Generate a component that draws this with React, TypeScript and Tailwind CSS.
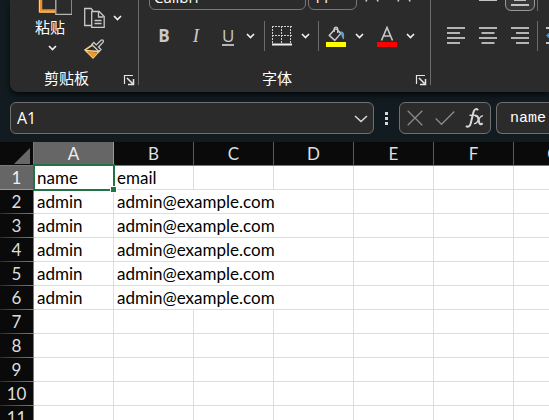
import type { ReactNode } from 'react';

const columns = ['A', 'B', 'C', 'D', 'E', 'F', 'G'];

const records = [
  { name: 'name', email: 'email' },
  { name: 'admin', email: 'admin@example.com' },
  { name: 'admin', email: 'admin@example.com' },
  { name: 'admin', email: 'admin@example.com' },
  { name: 'admin', email: 'admin@example.com' },
  { name: 'admin', email: 'admin@example.com' },
];

const rowNumbers = Array.from({ length: 11 }, (_, i) => i + 1);

function Chevron() {
  return (
    <svg width="9" height="6" viewBox="0 0 9 6" fill="none" stroke="#f2f2f2" strokeWidth="1.6" aria-hidden="true">
      <path d="M1 1l3.5 3.5L8 1" />
    </svg>
  );
}

function MenuButton({ label }: { label: string }) {
  return (
    <button type="button" aria-label={label} className="flex h-6 w-5 items-center justify-center">
      <Chevron />
    </button>
  );
}

function Launcher({ label }: { label: string }) {
  return (
    <button type="button" aria-label={label} className="mt-1 flex size-3 items-center justify-center">
      <svg width="12" height="12" viewBox="0 0 12 12" fill="none" stroke="#e6e6e6" aria-hidden="true">
        <path d="M1.5 10V1.5H10" strokeWidth="1.2" />
        <path d="M4 4l5.5 5.5M10.5 5v5.5H5" strokeWidth="1.5" />
      </svg>
    </button>
  );
}

function GroupLabel({ text, children }: { text: string; children?: ReactNode }) {
  return (
    <div className="flex h-6 items-center pr-[3px]">
      <span className="flex-1 text-center text-[15px] leading-6 whitespace-nowrap">{text}</span>
      {children}
    </div>
  );
}

function AlignIcon({ kind }: { kind: 'left' | 'center' | 'right' }) {
  const x = kind === 'left' ? 0 : kind === 'center' ? 2.5 : 5;
  return (
    <svg width="18" height="18" viewBox="0 0 18 18" fill="#b4b4b4" aria-hidden="true">
      <rect x="0" y="0" width="18" height="2" />
      <rect x={x} y="5" width="13" height="2" />
      <rect x="0" y="10" width="18" height="2" />
      <rect x={x} y="15" width="13" height="2" />
    </svg>
  );
}

function FontSizeIcon() {
  return (
    <svg width="14" height="18" viewBox="0 0 14 18" fill="none" stroke="#c9c9c9" strokeWidth="1.6" aria-hidden="true">
      <path d="M1 17.5L7 2l6 15.5M3 12.5h8" />
    </svg>
  );
}

function ClipboardGroup() {
  return (
    <section aria-label="剪贴板" className="flex w-32 shrink-0 flex-col">
      <div className="flex h-[66px] pl-6">
        <button type="button" className="flex w-9 flex-col items-center">
          <svg width="36" height="16" viewBox="0 0 36 16" fill="none" className="ml-1" aria-hidden="true">
            <path d="M4.5 0v11H19" stroke="#e8912d" strokeWidth="3.5" />
            <path d="M3.5 0v12H19" stroke="#f8cf85" strokeWidth="1" />
            <path d="M19.8 0v14.3H36V0" fill="#2b2b2b" stroke="#b5b5b5" strokeWidth="1.3" />
          </svg>
          <span className="mt-px -ml-1 text-[15px] leading-5 whitespace-nowrap">粘贴</span>
          <span className="mt-2">
            <Chevron />
          </span>
        </button>
        <div className="ml-3 flex flex-col pt-1">
          <div className="flex items-center gap-px">
            <button type="button" aria-label="复制" className="flex h-7 w-6 items-center justify-center">
              <svg width="22" height="22" viewBox="0 0 22 22" fill="none" stroke="#c9c9c9" strokeWidth="1.3" aria-hidden="true">
                <path d="M8 18.5H1.7V1.5H8l2 2.3" />
                <path d="M8.7 4.5h7.5l5 5v10.8H8.7z" fill="#2b2b2b" />
                <path d="M15.5 5v5h5M11.5 13.5h7M11.5 16.5h7" />
              </svg>
            </button>
            <MenuButton label="复制选项" />
          </div>
          <button type="button" aria-label="格式刷" className="mt-[3px] flex h-7 w-6 items-center justify-center">
            <svg width="22" height="22" viewBox="0 0 22 22" fill="none" aria-hidden="true">
              <path d="M9.5 7L2 11.8l8 8.2 6.3-7z" fill="#2b2b2b" stroke="#f3cf85" strokeWidth="1.5" />
              <path d="M4 13.3l11 1.4-5 5z" fill="#f0962c" />
              <path d="M3 12.5l12 1" stroke="#f9d98f" strokeWidth="1.3" />
              <path d="M8.8 6.5l2-2 2.5 2.4 4.7-4.6c1.5-1.2 3.3.6 2 2L15.5 9l2.5 2.5-2 2z" fill="#2b2b2b" stroke="#c9c9c9" strokeWidth="1.3" />
            </svg>
          </button>
        </div>
      </div>
      <GroupLabel text="剪贴板">
        <Launcher label="剪贴板设置" />
      </GroupLabel>
    </section>
  );
}

function FontGroup() {
  const select =
    "block h-[26px] appearance-none rounded-md border border-[#777] bg-[#2b2b2b] px-1 font-['Open_Sans',sans-serif] text-[15px] leading-6 text-white";
  return (
    <section aria-label="字体" className="flex w-[291px] shrink-0 flex-col">
      <div className="-mt-4 flex h-[27px] items-start gap-[2px] pl-[10px]">
        <select aria-label="字体名称" className={select + ' w-[157px]'}>
          <option>Calibri</option>
        </select>
        <select aria-label="字号" className={select + ' w-[49px]'}>
          <option>11</option>
        </select>
        <button type="button" aria-label="增大字号" className="ml-[6px]">
          <FontSizeIcon />
        </button>
        <button type="button" aria-label="减小字号" className="ml-4">
          <FontSizeIcon />
        </button>
      </div>
      <div className="mt-[10px] flex h-[30px] items-center pl-[13px] font-['Open_Sans',sans-serif] text-[17px] text-[#c9c9c9]">
        <button type="button" aria-label="加粗" className="w-6 font-bold">
          B
        </button>
        <button type="button" aria-label="倾斜" className="ml-2 w-6 font-['Liberation_Serif',serif] text-[19px] italic">
          I
        </button>
        <button type="button" aria-label="下划线" className="ml-2 flex w-6 justify-center">
          <span className="w-3 border-b-2 border-[#b5b5b5] text-center leading-[17px]">U</span>
        </button>
        <MenuButton label="下划线选项" />
        <span className="ml-1 h-full w-px bg-[#6b6b6b]" />
        <button type="button" aria-label="边框" className="ml-[7px]">
          <svg width="20" height="20" viewBox="0 0 20 20" fill="none" stroke="#d0d0d0" aria-hidden="true">
            <path d="M0 .5h20M0 9.5h20M.5 0v18M9.5 0v18M18.5 0v18" strokeDasharray="2 1" />
            <path d="M0 18.5h20" stroke="#eee" strokeWidth="2" />
          </svg>
        </button>
        <span className="ml-[3px] flex">
          <MenuButton label="边框选项" />
        </span>
        <span className="ml-[3px] h-full w-px bg-[#6b6b6b]" />
        <button type="button" aria-label="填充颜色" className="ml-[7px]">
          <svg width="20" height="21" viewBox="0 0 20 21" fill="none" aria-hidden="true">
            <path d="M9 3L3.3 9.4l5.5 5 6-7L10.5 3z" stroke="#c9c9c9" strokeWidth="1.5" />
            <path d="M8.2 6V2.5C8.5.7 11.5.7 11.7 2.5V7" stroke="#c9c9c9" strokeWidth="1.4" />
            <path d="M14 5.5c4-.5 4.7 2 3.8 8-2-1-2-4-3.8-8z" fill="#5f9fd0" />
            <path d="M0 16h20v5H0z" fill="#ff0" />
          </svg>
        </button>
        <span className="ml-[3px] flex">
          <MenuButton label="填充颜色选项" />
        </span>
        <button type="button" aria-label="字体颜色" className="ml-2">
          <svg width="20" height="21" viewBox="0 0 20 21" fill="none" aria-hidden="true">
            <path d="M4.5 14.5L10 1.5l5.5 13M6.5 10h7" stroke="#c9c9c9" strokeWidth="1.6" />
            <path d="M0 16h20v5H0z" fill="#f00" />
          </svg>
        </button>
        <span className="ml-[3px] flex">
          <MenuButton label="字体颜色选项" />
        </span>
      </div>
      <div className="mt-[15px]">
        <GroupLabel text="字体">
          <Launcher label="字体设置" />
        </GroupLabel>
      </div>
    </section>
  );
}

function AlignmentGroup() {
  return (
    <section aria-label="对齐方式" className="flex min-w-0 flex-1 flex-col overflow-hidden">
      <div className="-mt-5 flex h-[31px] shrink-0 items-stretch pl-4">
        <button type="button" aria-label="顶端对齐" className="w-8" />
        <button type="button" aria-label="垂直居中" className="flex w-[18px] items-end pb-[10px]">
          <span className="h-[2px] w-full bg-[#c4c4c4]" />
        </button>
        <button
          type="button"
          aria-label="底端对齐"
          className="ml-2 flex w-[30px] flex-col items-center justify-end gap-[3px] rounded-md border border-[#999] bg-[#383838] pb-1"
        >
          <span className="h-[2px] w-3 bg-[#c4c4c4]" />
          <span className="h-[2px] w-[18px] bg-[#c4c4c4]" />
        </button>
        <span className="ml-[2px] w-px shrink-0 bg-[#6b6b6b]" />
      </div>
      <div className="mt-[10px] flex h-[30px] shrink-0 items-center pl-4">
        <button type="button" aria-label="左对齐">
          <AlignIcon kind="left" />
        </button>
        <button type="button" aria-label="居中" className="ml-[14px]">
          <AlignIcon kind="center" />
        </button>
        <button type="button" aria-label="右对齐" className="ml-[14px]">
          <AlignIcon kind="right" />
        </button>
        <span className="ml-2 h-full w-px shrink-0 bg-[#6b6b6b]" />
        <button type="button" aria-label="减少缩进量" className="ml-2 shrink-0">
          <svg width="20" height="18" viewBox="0 0 20 18" fill="#c4c4c4" aria-hidden="true">
            <path d="M0 0h20v2H0zM10 5h10v2H10zM10 10h10v2H10zM0 15h20v2H0z" />
            <path d="M0 8.5L5 4v3h4v3H5v3z" fill="#3a9be0" />
          </svg>
        </button>
      </div>
    </section>
  );
}

function Ribbon() {
  return (
    <header className="ml-[10px] flex h-[92px] shrink-0 overflow-hidden rounded-bl-lg bg-[#2b2b2b] text-white shadow-md shadow-black/60">
      <ClipboardGroup />
      <span className="mb-[7px] w-px shrink-0 bg-[#6b6b6b]" />
      <FontGroup />
      <span className="mb-[7px] w-px shrink-0 bg-[#6b6b6b]" />
      <AlignmentGroup />
    </header>
  );
}

function FormulaBar() {
  return (
    <div className="flex shrink-0 pt-[10px] pb-2 pl-[10px]">
      <div className="flex h-8 w-[364px] shrink-0 items-center rounded-md border border-[#6f6f6f] bg-[#2b2b2b] pr-[5px] pl-[6px]">
        <input
          aria-label="名称框"
          defaultValue="A1"
          className="min-w-0 flex-1 bg-transparent font-['Open_Sans',sans-serif] text-[16px] text-white outline-none"
        />
        <button type="button" aria-label="展开名称框">
          <svg width="14" height="9" viewBox="0 0 14 9" fill="none" stroke="#d8d8d8" strokeWidth="1.5" aria-hidden="true">
            <path d="M1 2l6 5.5L13 2" />
          </svg>
        </button>
      </div>
      <div className="flex w-[25px] shrink-0 flex-col items-center justify-center gap-[2px]">
        <span className="size-[3px] bg-[#d8d8d8]" />
        <span className="size-[3px] bg-[#d8d8d8]" />
        <span className="size-[3px] bg-[#d8d8d8]" />
      </div>
      <div className="flex h-8 w-[92px] shrink-0 items-center rounded-md border border-[#6f6f6f] bg-[#2b2b2b] pl-[7px]">
        <button type="button" aria-label="取消">
          <svg width="16" height="16" viewBox="0 0 16 16" stroke="#8a8a8a" strokeWidth="1.3" aria-hidden="true">
            <path d="M.7.7l14.6 14.6M15.3.7L.7 15.3" />
          </svg>
        </button>
        <button type="button" aria-label="输入" className="ml-3">
          <svg width="20" height="16" viewBox="0 0 20 16" fill="none" stroke="#8a8a8a" strokeWidth="1.3" aria-hidden="true">
            <path d="M.7 8.5l5.8 5.8L19.3 1.5" />
          </svg>
        </button>
        <button type="button" aria-label="插入函数" className="ml-[10px]">
          <svg width="19" height="20" viewBox="0 0 19 20" fill="none" stroke="#d8d8d8" aria-hidden="true">
            <path d="M13 2.2c-1-1.8-3.6-1.6-4.5 1.8L5.7 15.5c-.7 3-2.9 4-4.7 2.5" strokeWidth="2" />
            <path d="M4.5 7.3h7" strokeWidth="1.4" />
            <path d="M10.2 8.5c2-1.5 2.7 0 3.2 2.5l.8 3.5c.5 2 1.7 2.5 3.5.8" strokeWidth="2" />
            <path d="M18 8c-2-.6-3.2 1.5-4.3 3.5-1.2 2.4-2.4 5-4.7 4" strokeWidth="1.4" />
          </svg>
        </button>
      </div>
      <input
        aria-label="编辑栏"
        defaultValue="name"
        className="ml-[5px] h-8 min-w-0 flex-1 rounded-l-md border border-r-0 border-[#6f6f6f] bg-[#2b2b2b] pl-[13px] font-['Liberation_Mono',monospace] text-[15px] text-white outline-none"
      />
    </div>
  );
}

function Sheet() {
  const cell = 'h-6 border-r border-b border-[#dedede] bg-white p-0 pl-[3px] leading-6 whitespace-nowrap';
  return (
    <table className="w-[594px] shrink-0 table-fixed border-separate border-spacing-0 font-[Lato,sans-serif] text-[17px] text-black">
      <colgroup>
        <col className="w-[34px]" />
        {columns.map((c) => (
          <col key={c} className="w-20" />
        ))}
      </colgroup>
      <thead>
        <tr>
          <th aria-label="全选" className="h-6 border-r border-b border-[#7a7a7a] bg-[#0a0a0a] p-0">
            <svg width="16" height="16" viewBox="0 0 16 16" className="mt-1 ml-[14px] block" aria-hidden="true">
              <path d="M16 0v16H0z" fill="#686868" />
            </svg>
          </th>
          {columns.map((c) => (
            <th
              key={c}
              scope="col"
              className={
                c === 'A'
                  ? 'h-6 border-r border-b border-[#999] bg-[#666] p-0 leading-[23px] font-normal text-[#f0f0f0]'
                  : 'h-6 border-r border-b border-r-[#5a5a5a] border-b-[#7a7a7a] bg-[#0a0a0a] p-0 leading-[23px] font-normal text-[#dedede]'
              }
            >
              {c}
            </th>
          ))}
        </tr>
      </thead>
      <tbody>
        {rowNumbers.map((n) => {
          const record = records[n - 1];
          const wide = n > 1 && record !== undefined;
          return (
            <tr key={n} className="h-6">
              <th
                scope="row"
                className={
                  n === 1
                    ? 'h-6 border-r border-b border-[#999] bg-[#666] p-0 leading-[23px] font-normal text-[#f0f0f0]'
                    : 'h-6 border-r border-[#7a7a7a] bg-[#0a0a0a] bg-[linear-gradient(to_right,#2a2a2a,#7a7a7a)] bg-[length:100%_1px] bg-bottom bg-no-repeat p-0 leading-6 font-normal text-[#dedede]'
                }
              >
                {n}
              </th>
              <td className={n === 1 ? cell + ' relative z-10 leading-[23px]' : cell + ' leading-[23px]'}>
                {record?.name}
                {n === 1 && (
                  <span className="pointer-events-none absolute -top-[2px] -right-[2px] -bottom-[2px] -left-px border-2 border-[#217346]">
                    <span className="absolute -right-[4px] -bottom-[4px] size-[7px] border border-white bg-[#217346]" />
                  </span>
                )}
              </td>
              <td className={cell + ' leading-[23px]'} colSpan={wide ? 3 : 1}>
                {record?.email}
              </td>
              {(wide ? columns.slice(4) : columns.slice(2)).map((c) => (
                <td key={c} className={cell + ' leading-[23px]'} />
              ))}
            </tr>
          );
        })}
      </tbody>
    </table>
  );
}

export default function App() {
  return (
    <main className="flex h-screen flex-col overflow-hidden bg-[#111b20] font-['Noto_Sans_CJK_SC',sans-serif]">
      <Ribbon />
      <FormulaBar />
      <Sheet />
    </main>
  );
}
